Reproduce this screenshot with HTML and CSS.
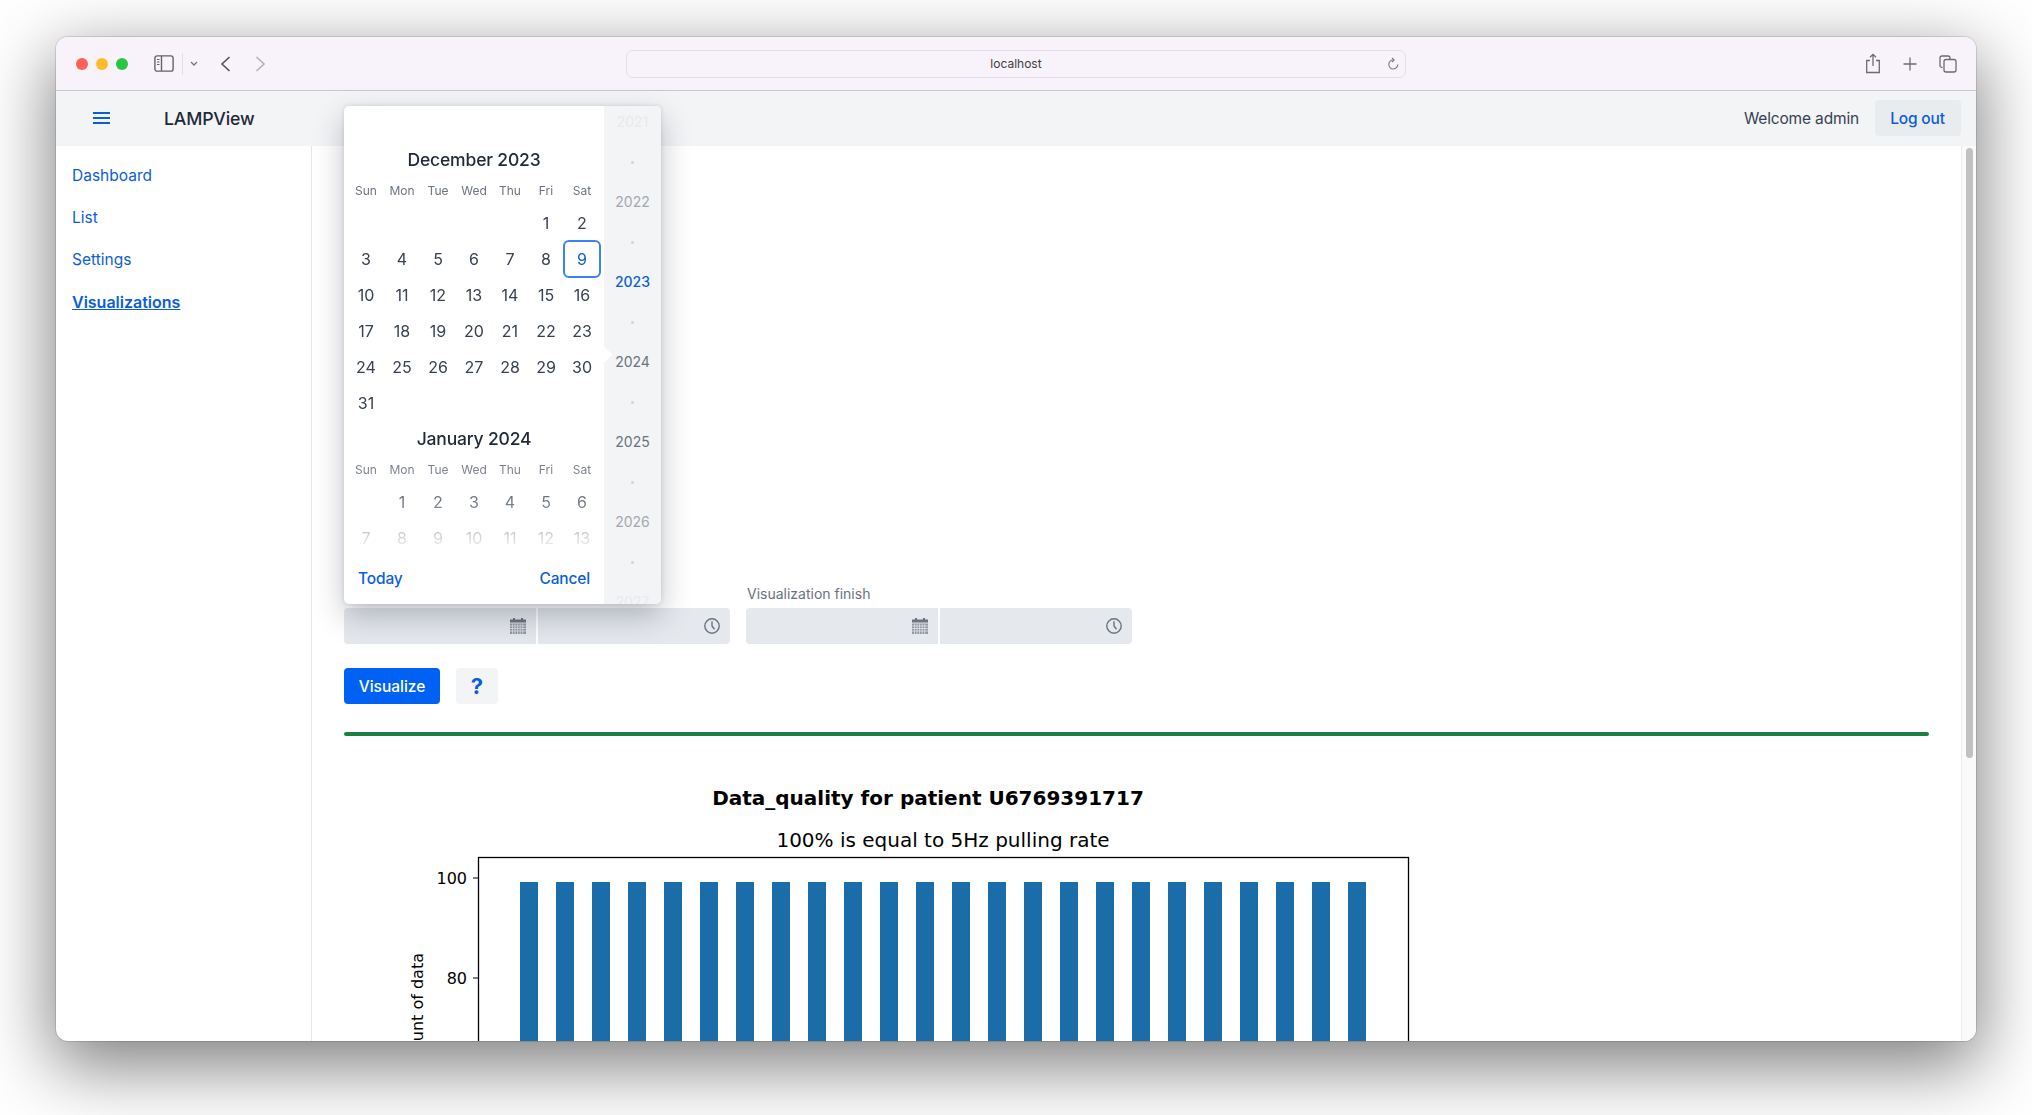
FILE: index.html
```html
<!DOCTYPE html>
<html lang="en">
<head>
<meta charset="UTF-8" />
<meta name="viewport" content="width=device-width, initial-scale=1" />
<title>LAMPView</title>
<link rel="stylesheet" href="styles.css">
</head>
<body>

<div class="window">

  <!-- Browser toolbar -->
  <div class="toolbar">
    <div class="lights">
      <span class="light red"></span>
      <span class="light yellow"></span>
      <span class="light green"></span>
    </div>
    <svg class="tool-sidebar" width="20" height="17" viewBox="0 0 20 17" fill="none" stroke="#66626a" stroke-width="1.4">
      <rect x="0.9" y="0.9" width="18.2" height="15.2" rx="2.2"/>
      <path d="M7.5 1v15"/>
      <path d="M3 4.5h2.5M3 7h2.5M3 9.500h2.500" stroke-width="1.100"/>
    </svg>
    <span class="tool-divider"></span>
    <svg class="tool-chevron" width="8" height="5" viewBox="0 0 8 5" fill="none" stroke="#77737b" stroke-width="1.300"><path d="M1 1l3 3 3-3"/></svg>
    <svg class="tool-back" width="11" height="16" viewBox="0 0 11 16" fill="none" stroke="#56525a" stroke-width="1.600"><path d="M9.500 1L2 8l7.500 7"/></svg>
    <svg class="tool-forward" width="11" height="16" viewBox="0 0 11 16" fill="none" stroke="#b4b0b6" stroke-width="1.600"><path d="M1.500 1L9 8l-7.500 7"/></svg>
    <div class="urlbar">
      <span class="url">localhost</span>
      <svg class="reload" width="12" height="14" viewBox="0 0 12 14" fill="none" stroke="#7c7880" stroke-width="1.100">
        <path d="M6.500 3A4.500 4.500 0 1 0 10.800 7.500"/>
        <path d="M5 0.800L7.200 3 5 5.200"/>
      </svg>
    </div>
    <div class="tool-right">
      <svg width="16" height="21" viewBox="0 0 16 21" fill="none" stroke="#6e6a72" stroke-width="1.300">
        <path d="M5 7.500H1.700v12h12.600v-12H11"/>
        <path d="M8 13V1.500M5 4.300L8 1.300l3 3"/>
      </svg>
      <svg width="14" height="14" viewBox="0 0 14 14" fill="none" stroke="#6e6a72" stroke-width="1.300"><path d="M7 0.500v13M0.500 7h13"/></svg>
      <svg width="18" height="18" viewBox="0 0 18 18" fill="none" stroke="#6e6a72" stroke-width="1.300">
        <path d="M3.500 12.500H3A2 2 0 0 1 1 10.500V3A2 2 0 0 1 3 1h6a2 2 0 0 1 2 2v1"/>
        <rect x="5" y="4.500" width="12" height="12.500" rx="2"/>
      </svg>
    </div>
  </div>

  <!-- App navbar -->
  <header class="navbar">
    <button class="burger" aria-label="Menu">
      <span></span><span></span><span></span>
    </button>
    <span class="brand">LAMPView</span>
    <span class="welcome">Welcome admin</span>
    <a class="logout" href="#">Log out</a>
  </header>

  <div class="page">
    <nav class="sidebar">
      <a href="#">Dashboard</a>
      <a href="#">List</a>
      <a href="#">Settings</a>
      <a href="#" class="current">Visualizations</a>
    </nav>

    <main class="content">
      <div class="range">
        <div class="range-field">
          <label>Visualization start</label>
          <div class="inputs">
            <div class="input">
              <svg class="icon-cal" width="16" height="16" viewBox="0 0 16 16" fill="#6b7280">
                <path d="M3 0h2v1.500h6V0h2v1.500h3V4.500H0V1.500h3z"/>
                <path d="M0 5.500h16v10.500H0z" opacity="0.7"/>
                <path d="M2.400 5.500v10.500M5 5.500v10.500M7.600 5.500v10.500M10.200 5.500v10.500M12.800 5.500v10.500M0 8h16M0 10.500h16M0 13h16" stroke="#e5e7eb" stroke-width="0.800"/>
              </svg>
            </div>
            <div class="input">
              <svg width="16" height="16" viewBox="0 0 16 16" fill="none" stroke="#6b7280" stroke-width="1.400">
                <circle cx="8" cy="8" r="7.200"/>
                <path d="M8 3.200V8l2.500 3.200"/>
              </svg>
            </div>
          </div>
        </div>
        <div class="range-field">
          <label>Visualization finish</label>
          <div class="inputs">
            <div class="input">
              <svg class="icon-cal" width="16" height="16" viewBox="0 0 16 16" fill="#6b7280">
                <path d="M3 0h2v1.500h6V0h2v1.500h3V4.500H0V1.500h3z"/>
                <path d="M0 5.500h16v10.500H0z" opacity="0.7"/>
                <path d="M2.400 5.500v10.500M5 5.500v10.500M7.600 5.500v10.500M10.200 5.500v10.500M12.800 5.500v10.500M0 8h16M0 10.500h16M0 13h16" stroke="#e5e7eb" stroke-width="0.800"/>
              </svg>
            </div>
            <div class="input">
              <svg width="16" height="16" viewBox="0 0 16 16" fill="none" stroke="#6b7280" stroke-width="1.400">
                <circle cx="8" cy="8" r="7.200"/>
                <path d="M8 3.200V8l2.500 3.200"/>
              </svg>
            </div>
          </div>
        </div>
      </div>

      <div class="actions">
        <button class="btn-primary">Visualize</button>
        <button class="btn-help">?</button>
      </div>

      <hr class="divider">

      <!-- Chart image from the backend, redrawn -->
      <svg class="chart" width="1100" height="300" viewBox="0 0 1100 300">
        <text class="chart-title" x="584" y="35" text-anchor="middle">Data_quality for patient U6769391717</text>
        <text class="chart-sub" x="599" y="77" text-anchor="middle">100% is equal to 5Hz pulling rate</text>
        <g fill="#1b6da9">
          <rect x="176" y="112" width="18" height="200"/><rect x="212" y="112" width="18" height="200"/>
          <rect x="248" y="112" width="18" height="200"/><rect x="284" y="112" width="18" height="200"/>
          <rect x="320" y="112" width="18" height="200"/><rect x="356" y="112" width="18" height="200"/>
          <rect x="392" y="112" width="18" height="200"/><rect x="428" y="112" width="18" height="200"/>
          <rect x="464" y="112" width="18" height="200"/><rect x="500" y="112" width="18" height="200"/>
          <rect x="536" y="112" width="18" height="200"/><rect x="572" y="112" width="18" height="200"/>
          <rect x="608" y="112" width="18" height="200"/><rect x="644" y="112" width="18" height="200"/>
          <rect x="680" y="112" width="18" height="200"/><rect x="716" y="112" width="18" height="200"/>
          <rect x="752" y="112" width="18" height="200"/><rect x="788" y="112" width="18" height="200"/>
          <rect x="824" y="112" width="18" height="200"/><rect x="860" y="112" width="18" height="200"/>
          <rect x="896" y="112" width="18" height="200"/><rect x="932" y="112" width="18" height="200"/>
          <rect x="968" y="112" width="18" height="200"/><rect x="1004" y="112" width="18" height="200"/>
        </g>
        <rect x="134.500" y="87.500" width="930" height="240" fill="none" stroke="#000" stroke-width="1.300"/>
        <path d="M129 108h5M129 208h5" stroke="#000" stroke-width="1.200"/>
        <text class="chart-tick" x="123" y="114" text-anchor="end">100</text>
        <text class="chart-tick" x="123" y="214" text-anchor="end">80</text>
        <text class="chart-tick" transform="translate(79 183) rotate(-90)" text-anchor="end">Amount of data</text>
      </svg>
    </main>

    <div class="scrollbar"><span class="thumb"></span></div>
  </div>

  <!-- Date picker popup -->
  <div class="picker">
    <div class="picker-main">
      <div class="months">
        <div class="month">
          <div class="month-title">December 2023</div>
          <div class="weekdays"><span>Sun</span><span>Mon</span><span>Tue</span><span>Wed</span><span>Thu</span><span>Fri</span><span>Sat</span></div>
          <div class="days">
            <span></span><span></span><span></span><span></span><span></span><span>1</span><span>2</span>
            <span>3</span><span>4</span><span>5</span><span>6</span><span>7</span><span>8</span><span class="selected">9</span>
            <span>10</span><span>11</span><span>12</span><span>13</span><span>14</span><span>15</span><span>16</span>
            <span>17</span><span>18</span><span>19</span><span>20</span><span>21</span><span>22</span><span>23</span>
            <span>24</span><span>25</span><span>26</span><span>27</span><span>28</span><span>29</span><span>30</span>
            <span>31</span>
          </div>
        </div>
        <div class="month">
          <div class="month-title">January 2024</div>
          <div class="weekdays"><span>Sun</span><span>Mon</span><span>Tue</span><span>Wed</span><span>Thu</span><span>Fri</span><span>Sat</span></div>
          <div class="days">
            <span></span><span>1</span><span>2</span><span>3</span><span>4</span><span>5</span><span>6</span>
            <span>7</span><span>8</span><span>9</span><span>10</span><span>11</span><span>12</span><span>13</span>
          </div>
        </div>
      </div>
      <div class="picker-footer">
        <a href="#">Today</a>
        <a href="#">Cancel</a>
      </div>
    </div>
    <div class="years">
      <span class="year fade-3">2021</span><span class="year-dot"></span>
      <span class="year fade-2">2022</span><span class="year-dot"></span>
      <span class="year active">2023</span><span class="year-dot"></span>
      <span class="year fade-1">2024</span><span class="year-dot"></span>
      <span class="year fade-1">2025</span><span class="year-dot"></span>
      <span class="year fade-2">2026</span><span class="year-dot"></span>
      <span class="year fade-3">2027</span>
    </div>
    <span class="picker-arrow"></span>
  </div>

</div>

</body>
</html>
```

FILE: styles.css
```css
* {
  box-sizing: border-box;
}
html, body {
  margin: 0;
  height: 1115px;
  overflow: hidden;
  background: #fff;
}
body {
  padding: 37px 56px 0;
  font-family: Inter, 'Noto Sans', sans-serif;
  color: #1f2937;
}
a {
  color: #0b5ed7;
  text-decoration: none;
}
button {
  font-family: inherit;
  border: none;
  cursor: pointer;
}

/* window */
.window {
  position: relative;
  display: flex;
  flex-direction: column;
  width: 1920px;
  height: 1004px;
  background: #fff;
  border-radius: 12px;
  overflow: visible;
  box-shadow: 0 22px 70px 4px rgba(0, 0, 0, 0.5), 0 0 0 1px rgba(0, 0, 0, 0.12);
}

/* browser toolbar */
.toolbar {
  display: flex;
  align-items: center;
  flex: none;
  height: 54px;
  padding: 0 0 0 20px;
  background: #f8f3fa;
  border-bottom: 1px solid #c9c7cb;
  border-radius: 12px 12px 0 0;
}
.lights {
  display: flex;
  gap: 8px;
  margin-right: 26px;
}
.light {
  width: 12px;
  height: 12px;
  border-radius: 50%;
}
.red { background: #fe5f57; }
.yellow { background: #febb2e; }
.green { background: #28c73f; }
.tool-divider {
  width: 1px;
  height: 22px;
  margin: 0 7px 0 8px;
  background: #e4dfe6;
}
.tool-back {
  margin: 0 24px 0 22px;
}
.urlbar {
  position: relative;
  display: flex;
  align-items: center;
  justify-content: center;
  width: 780px;
  height: 28px;
  margin-left: 360px;
  border: 1px solid #e2dce5;
  border-radius: 7px;
}
.url {
  font-size: 12px;
  color: #3f3c42;
}
.reload {
  position: absolute;
  right: 6px;
  top: 6px;
}
.tool-right {
  display: flex;
  align-items: center;
  gap: 22px;
  margin-left: 459px;
}

/* navbar */
.navbar {
  display: flex;
  align-items: center;
  flex: none;
  height: 55px;
  padding: 0 15px 0 37px;
  background: #f3f4f6;
}
.burger {
  display: flex;
  flex-direction: column;
  justify-content: space-between;
  width: 17px;
  height: 12px;
  margin-bottom: 2px;
  padding: 0;
  background: none;
}
.burger span {
  height: 2px;
  background: #0b5ed7;
}
.brand {
  margin-left: 54px;
  font-size: 17.700px;
  font-weight: 500;
  letter-spacing: -0.01em;
}
.welcome {
  margin-left: auto;
  margin-right: 16px;
  font-size: 15.500px;
  letter-spacing: -0.01em;
  color: #374151;
}
.logout {
  display: flex;
  align-items: center;
  justify-content: center;
  width: 86px;
  height: 36px;
  margin-bottom: 1px;
  padding-right: 1px;
  background: #e9ecef;
  border-radius: 4px;
  font-size: 15.500px;
  font-weight: 500;
  letter-spacing: -0.01em;
}

/* page */
.page {
  display: flex;
  flex: 1;
  min-height: 0;
  border-radius: 0 0 12px 12px;
  overflow: hidden;
}
.sidebar {
  display: flex;
  flex-direction: column;
  flex: none;
  gap: 18px;
  width: 256px;
  padding: 18px 16px;
  border-right: 1px solid #e5e7eb;
  font-size: 15.500px;
}
.sidebar a {
  line-height: 24px;
}
.sidebar .current {
  font-size: 16px;
  font-weight: 600;
  text-decoration: underline;
}
.content {
  flex: 1;
  min-width: 0;
  padding: 438px 32px 0;
  overflow: hidden;
}
.scrollbar {
  flex: none;
  width: 15px;
  padding: 2px 3px 0 4px;
  background: #fafafa;
  border-left: 1px solid #ebebeb;
}
.thumb {
  display: block;
  height: 610px;
  background: #c1c1c1;
  border-radius: 4px;
}

/* date + time inputs */
.range {
  display: flex;
  gap: 16px;
}
.range-field {
  width: 386px;
}
.range-field label {
  display: block;
  height: 24px;
  padding-left: 1px;
  font-size: 14px;
  line-height: 20px;
  color: #6b7280;
}
.inputs {
  display: flex;
  gap: 2px;
  height: 36px;
}
.input {
  display: flex;
  align-items: center;
  justify-content: flex-end;
  flex: 1;
  padding-right: 10px;
  background: #e5e8ed;
}
.input:first-child {
  border-radius: 4px 0 0 4px;
}
.input:last-child {
  border-radius: 0 4px 4px 0;
}

/* buttons */
.actions {
  display: flex;
  gap: 16px;
  margin-top: 24px;
}
.btn-primary, .btn-help {
  height: 36px;
  border-radius: 4px;
  font-weight: 500;
}
.btn-primary {
  width: 96px;
  background: #0062f5;
  color: #fff;
  font-size: 15.500px;
}
.btn-help {
  width: 42px;
  padding: 0;
  background: #f3f4f6;
  color: #0b5ed7;
  font-size: 22px;
  font-weight: 700;
}
.divider {
  height: 4px;
  margin: 28px 0 34px;
  border: none;
  border-radius: 2px;
  background: #1a7f40;
}

/* chart */
.chart {
  display: block;
}
.chart text {
  font-family: 'DejaVu Sans', sans-serif;
  fill: #000;
}
.chart .chart-title {
  font-size: 20px;
  font-weight: 700;
}
.chart .chart-sub {
  font-size: 20px;
}
.chart .chart-tick {
  font-size: 16px;
}

/* date picker */
.picker {
  position: absolute;
  left: 288px;
  top: 69px;
  display: flex;
  width: 317px;
  height: 498px;
  background: #fff;
  border-radius: 5px;
  box-shadow: 0 12px 30px rgba(31, 41, 55, 0.28), 0 0 4px rgba(31, 41, 55, 0.15);
  overflow: hidden;
}
.picker-main {
  display: flex;
  flex-direction: column;
  flex: none;
  width: 260px;
}
.months {
  display: flex;
  flex-direction: column;
  flex: none;
  gap: 4px;
  height: 450px;
  padding: 40px 4px 0;
  overflow: hidden;
  -webkit-mask-image: linear-gradient(to bottom, #000 76%, rgba(0, 0, 0, 0.7) 88%, rgba(0, 0, 0, 0.2) 96%, transparent 100%);
  mask-image: linear-gradient(to bottom, #000 76%, rgba(0, 0, 0, 0.7) 88%, rgba(0, 0, 0, 0.2) 96%, transparent 100%);
}
.month-title {
  height: 28px;
  font-size: 17.500px;
  font-weight: 500;
  letter-spacing: -0.01em;
  line-height: 28px;
  text-align: center;
}
.weekdays, .days {
  display: grid;
  grid-template-columns: repeat(7, 36px);
}
.weekdays {
  height: 20px;
  margin: 7px 0 4px;
  font-size: 12px;
  line-height: 20px;
  text-align: center;
  color: #6b7280;
}
.days {
  grid-auto-rows: 36px;
  font-size: 16px;
  color: #374151;
}
.days span {
  display: flex;
  align-items: center;
  justify-content: center;
}
.days .selected {
  margin: -1px;
  border: 2px solid #3b82f6;
  border-radius: 6px;
  color: #0b5ed7;
}
.picker-footer {
  display: flex;
  justify-content: space-between;
  padding: 11px 14px 0;
  font-size: 15.500px;
  font-weight: 500;
  letter-spacing: -0.01em;
  line-height: 24px;
}
.years {
  display: flex;
  flex-direction: column;
  align-items: center;
  flex: 1;
  background: #f3f4f6;
  font-size: 14px;
}
.year {
  flex: none;
  height: 32px;
  line-height: 32px;
}
.year.active { color: #0b5ed7; font-weight: 500; }
.fade-1 { color: #6b7280; }
.fade-2 { color: #a3a8b0; }
.fade-3 { color: #e8eaed; }
.year-dot {
  flex: none;
  width: 3px;
  height: 3px;
  margin: 22.500px 0;
  border-radius: 50%;
  background: #d1d5db;
}
.picker-arrow {
  position: absolute;
  left: 255px;
  top: 243px;
  width: 11px;
  height: 11px;
  background: #fff;
  transform: rotate(45deg);
  border-radius: 1px;
}
```
